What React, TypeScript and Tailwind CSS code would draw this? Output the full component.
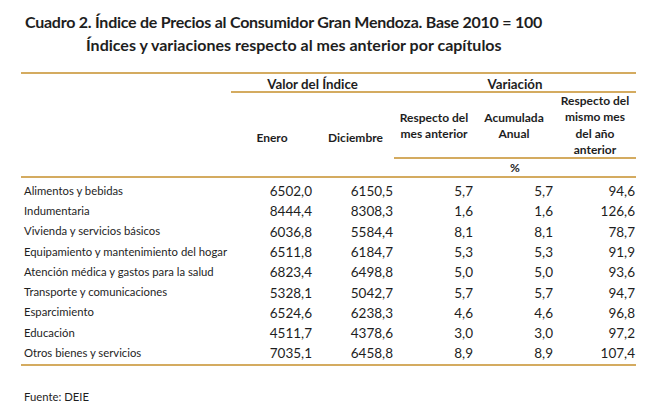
const rows: [string, string, string, string, string, string][] = [
    ["Alimentos y bebidas", "6502,0", "6150,5", "5,7", "5,7", "94,6"],
    ["Indumentaria", "8444,4", "8308,3", "1,6", "1,6", "126,6"],
    ["Vivienda y servicios básicos", "6036,8", "5584,4", "8,1", "8,1", "78,7"],
    ["Equipamiento y mantenimiento del hogar", "6511,8", "6184,7", "5,3", "5,3", "91,9"],
    ["Atención médica y gastos para la salud", "6823,4", "6498,8", "5,0", "5,0", "93,6"],
    ["Transporte y comunicaciones", "5328,1", "5042,7", "5,7", "5,7", "94,7"],
    ["Esparcimiento", "6524,6", "6238,3", "4,6", "4,6", "96,8"],
    ["Educación", "4511,7", "4378,6", "3,0", "3,0", "97,2"],
    ["Otros bienes y servicios", "7035,1", "6458,8", "8,9", "8,9", "107,4"],
]

const grid = "grid grid-cols-[210px_82px_81px_80px_80px_82px]"

export default function App() {
    return (
        <main className="w-[666px] h-[406px] bg-white text-[#1e1e1e] font-['Lato',sans-serif] overflow-hidden">
            <div className="pt-[10px] text-[16px] leading-[23px] font-bold">
                <p className="pl-[25px] tracking-[-0.25px]">
                    Cuadro 2. Índice de Precios al Consumidor Gran Mendoza. Base 2010 = 100
                </p>
                <p className="pl-[86px]">Índices y variaciones respecto al mes anterior por capítulos</p>
            </div>

            <div className="ml-[21px] mt-[16px] w-[615px] border-t-2 border-b-2 border-[#d4ab60]">
                {/* group headers */}
                <div className={`${grid} text-[13.3px] font-bold`}>
                    <div />
                    <div className="col-span-2 h-[19px] pt-[2px] leading-[17px] text-center border-b-2 border-[#d4ab60]">
                        Valor del Índice
                    </div>
                    <div className="col-span-3 h-[19px] pt-[2px] leading-[17px] text-center border-b-2 border-[#d4ab60]">
                        Variación
                    </div>
                </div>

                {/* column headers */}
                <div className={`${grid} h-[64px] text-[12px] font-bold leading-[16.4px] text-center`}>
                    <div />
                    <div className="pt-[37px]">Enero</div>
                    <div className="pt-[37px] pl-[4px]">Diciembre</div>
                    <div className="pt-[17px]">
                        Respecto del
                        <br />
                        mes anterior
                    </div>
                    <div className="pt-[17px]">
                        Acumulada
                        <br />
                        Anual
                    </div>
                    <div>
                        Respecto del
                        <br />
                        mismo mes
                        <br />
                        del año
                        <br />
                        anterior
                    </div>
                </div>

                <div className={`${grid} text-[12px] font-bold`}>
                    <div className="col-span-3" />
                    <div className="col-span-3 grid grid-cols-3 h-[19px] border-t-2 border-[#d4ab60] leading-[17px]">
                        <div />
                        <div className="text-center">%</div>
                        <div />
                    </div>
                </div>

                {/* data */}
                <div className="border-t-2 border-[#d4ab60] pt-[3px]">
                    {rows.map((r) => (
                        <div key={r[0]} className={`${grid} h-[20.3px] items-center text-[13.5px]`}>
                            <div className="pl-[3px] text-[11.3px]">{r[0]}</div>
                            <div className="pr-px text-right">{r[1]}</div>
                            <div className="pr-px text-right">{r[2]}</div>
                            <div className="pr-px text-right">{r[3]}</div>
                            <div className="pr-px text-right">{r[4]}</div>
                            <div className="pr-px text-right">{r[5]}</div>
                        </div>
                    ))}
                </div>
            </div>

            <p className="pl-[24px] pt-[23px] text-[11.3px]">Fuente: DEIE</p>
        </main>
    )
}
